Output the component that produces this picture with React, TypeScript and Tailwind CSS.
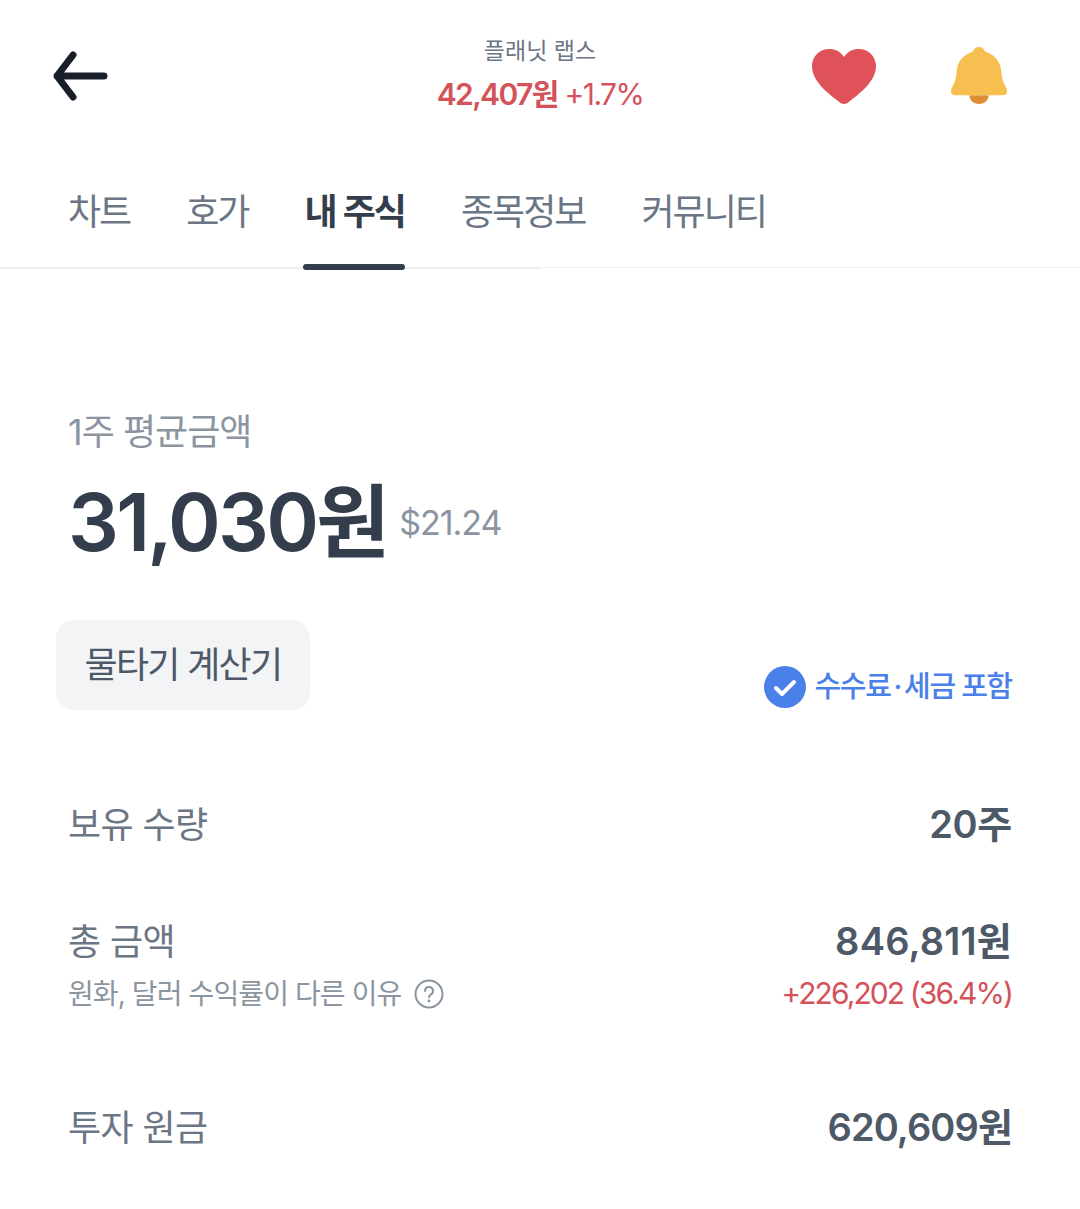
const tabs = ['차트', '호가', '내 주식', '종목정보', '커뮤니티'];

function Row({ label, value, top, tracking }: { label: string; value: string; top: string; tracking: string }) {
  return (
    <div className={`flex items-center justify-between ${top}`}>
      <span className="text-[36px] leading-[44px] tracking-[-0.6px] text-[#6b7684]">{label}</span>
      <span className={`pb-[2px] text-[38px] leading-[42px] font-semibold text-[#4e5968] ${tracking}`}>{value}</span>
    </div>
  );
}

export default function App() {
  return (
    <div
      className="min-h-[1209px] w-[1080px] overflow-hidden bg-white"
      style={{ fontFamily: 'Inter, "Noto Sans CJK KR", sans-serif' }}
    >
      {/* Header */}
      <div className="relative flex h-[150px] items-start justify-between pl-[52px] pr-[73px] pt-[36px]">
        <svg className="mt-[14px] h-[52px] w-[58px]" viewBox="0 0 58 52" fill="none">
          <path d="M21 5 5 26l16 21M5 26h47" stroke="#191f28" strokeWidth="7" strokeLinecap="round" strokeLinejoin="round" />
        </svg>
        <div className="absolute left-0 right-0 top-[36px] flex flex-col items-center">
          <span className="text-[23px] leading-[30px] text-[#6b7684]">플래닛 랩스</span>
          <span className="mt-[6px] text-[30px] leading-[44px] tracking-[-1.6px] text-[#d4525a]">
            <span className="font-semibold">42,407원</span> +1.7%
          </span>
        </div>
        <div className="flex items-center gap-[74px]">
          <svg className="mt-[12px] h-[58px] w-[66px]" viewBox="0 0 66 58">
            <path d="M33 56c-2 0-4-1-6-3C14 43 1 32 1 18 1 8 9 1 18 1c6 0 11 2 15 8 4-6 9-8 15-8 9 0 17 7 17 17 0 14-13 25-26 35-2 2-4 3-6 3Z" fill="#df525a" />
          </svg>
          <svg className="mt-[10px] h-[60px] w-[56px]" viewBox="0 0 58 60">
            <path d="M19 50h20c0 5-4 9-10 9s-10-4-10-9Z" fill="#dd8f37" />
            <path d="M29 0c3 0 5.500 2 6.500 5C44 7.500 51 14 52 24c.5 6 1 10 3 14l2.500 5c1.500 3 .5 7-3.500 7H4c-4 0-5-4-3.500-7L3 38c2-4 2.500-8 3-14C7 14 14 7.500 22.500 5c1-3 3.500-5 6.500-5Z" fill="#f6bf4f" />
          </svg>
        </div>
      </div>

      {/* Tabs */}
      <div className="relative flex h-[117px] items-start gap-[56px] pl-[68px]">
        {tabs.map((t) => (
          <div key={t} className="relative pt-[39px]">
            <span
              className={`text-[36px] leading-[46px] tracking-[-2px] ${
                t === '내 주식' ? 'font-semibold text-[#333d4b]' : 'text-[#6b7684]'
              }`}
            >
              {t}
            </span>
            {t === '내 주식' && (
              <div className="absolute -left-[2px] right-0 top-[114px] z-10 h-[6px] rounded-full bg-[#333d4b]" />
            )}
          </div>
        ))}
      </div>
      <div className="flex">
        <div className="h-[2px] w-[540px] bg-[#eeeff1]" />
        <div className="h-[1px] flex-1 bg-[#eeeff1]" />
      </div>

      {/* Content */}
      <div className="px-[68px] pt-[141px]">
        <div className="text-[36px] leading-[44px] tracking-[-1px] text-[#8b95a1]">1주 평균금액</div>
        <div className="mt-[18px] flex items-center gap-[12px]">
          <span className="text-[80px] leading-[100px] font-semibold tracking-[-2.7px] text-[#333d4b]">31,030원</span>
          <span className="text-[34px] tracking-[-1px] text-[#8b95a1]">$21.24</span>
        </div>

        <div className="-ml-[12px] mt-[48px] flex items-end justify-between">
          <div className="flex h-[90px] w-[254px] items-center justify-center rounded-[18px] bg-[#f2f4f6] text-[36px] tracking-[-1.7px] text-[#4e5968]">
            물타기 계산기
          </div>
          <div className="mb-[2px] flex items-center gap-[8px]">
            <svg className="h-[42px] w-[42px]" viewBox="0 0 42 42">
              <circle cx="21" cy="21" r="21" fill="#4a80ea" />
              <path d="M12 22l6 6 12-12" fill="none" stroke="white" strokeWidth="4" strokeLinecap="round" strokeLinejoin="round" />
            </svg>
            <span className="text-[29px] leading-[42px] font-medium tracking-[-1.3px] text-[#4a80ea]">
              수수료<span className="mx-[3px]">·</span>세금 포함
            </span>
          </div>
        </div>

        <Row label="보유 수량" value="20주" top="mt-[93px]" tracking="tracking-[-0.3px]" />

        <div className="mt-[73px] flex items-start justify-between">
          <div>
            <div className="text-[36px] leading-[44px] tracking-[-0.6px] text-[#6b7684]">총 금액</div>
            <div className="mt-[10px] flex items-center gap-[13px]">
              <span className="text-[28px] leading-[40px] tracking-[-0.9px] text-[#8b95a1]">원화, 달러 수익률이 다른 이유</span>
              <svg className="h-[30px] w-[30px]" viewBox="0 0 30 30" fill="none">
                <circle cx="15" cy="15" r="13.5" stroke="#8b95a1" strokeWidth="2" />
                <path d="M11 12a4 4 0 1 1 6 3.4c-1.3.8-2 1.5-2 2.8" stroke="#8b95a1" strokeWidth="2" strokeLinecap="round" />
                <circle cx="15" cy="22" r="1.4" fill="#8b95a1" />
              </svg>
            </div>
          </div>
          <div className="flex flex-col items-end">
            <span className="text-[38px] leading-[42px] font-semibold tracking-[0.2px] text-[#4e5968]">846,811원</span>
            <span className="mt-[11px] text-[30px] leading-[40px] tracking-[-1.9px] text-[#d4525a]">+226,202 (36.4%)</span>
          </div>
        </div>

        <Row label="투자 원금" value="620,609원" top="mt-[92px]" tracking="tracking-[-0.9px]" />
      </div>
    </div>
  );
}
